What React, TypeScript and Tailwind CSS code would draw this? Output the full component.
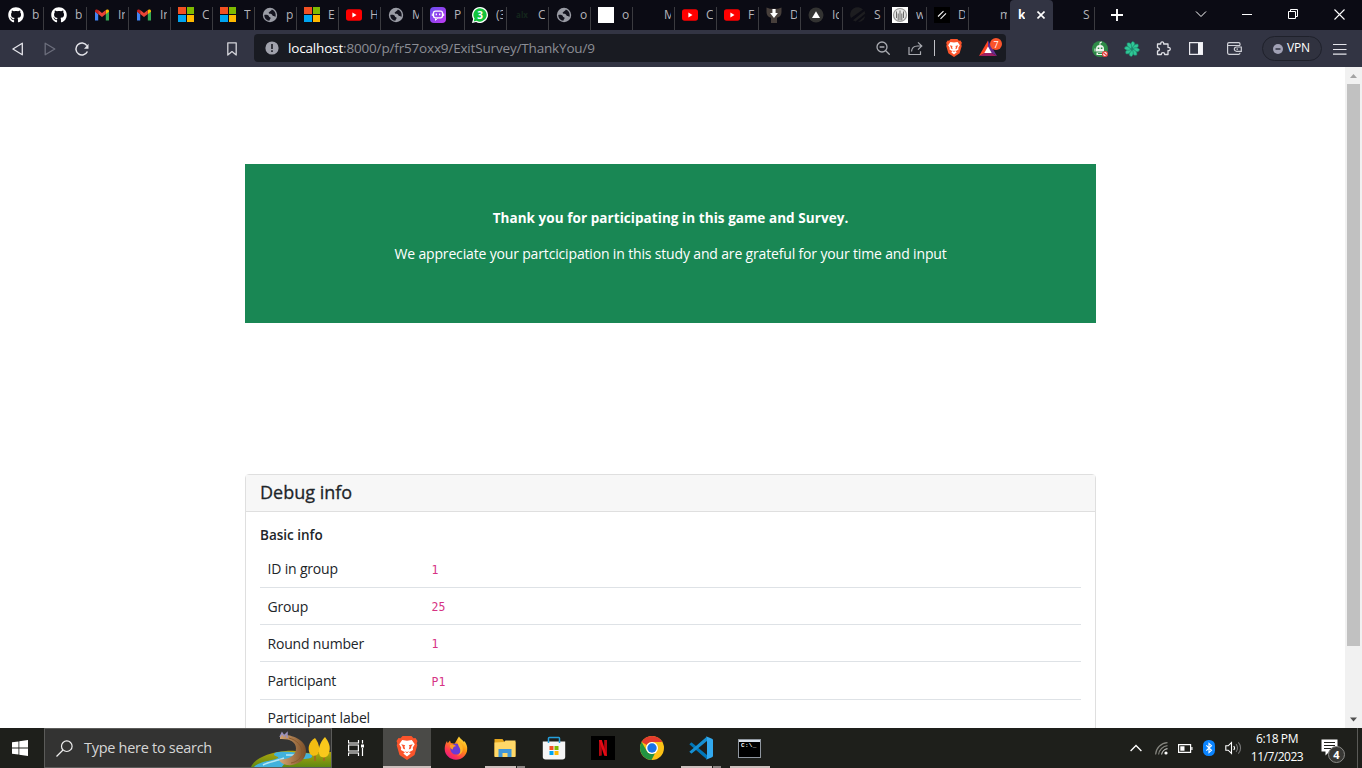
import React from "react";
import { FaGithub } from "react-icons/fa";

type P = { className?: string };

const Gmail = () => (
  <svg viewBox="0 0 16 16" className="size-4">
    <path d="M1 4.200V13.500h3.200V7L1 4.600z" fill="#4285f4" />
    <path d="M15 4.200V13.500h-3.200V7L15 4.600z" fill="#34a853" />
    <path d="M11.800 3.600V7.200L15 4.800V4c0-1.600-1.600-2-2.600-1.200z" fill="#fbbc04" />
    <path d="M4.200 3.600V7.200L1 4.800V4c0-1.600 1.600-2 2.600-1.200z" fill="#c5221f" />
    <path d="M4.200 3.100v4L8 10.100l3.800-3v-4L8 6.100z" fill="#ea4335" />
  </svg>
);

const Microsoft = () => (
  <svg viewBox="0 0 16 16" className="size-4" shapeRendering="crispEdges">
    <path d="M0 0h8v7H0z" fill="#f25022" />
    <path d="M9 0h7v7H9z" fill="#7fba00" />
    <path d="M0 8h8v7H0z" fill="#00a4ef" />
    <path d="M9 8h7v7H9z" fill="#ffb900" />
  </svg>
);

const Globe = () => (
  <svg viewBox="0 0 16 16" className="size-4">
    <circle cx="8" cy="8" r="7.200" fill="#9a9ca5" />
    <path d="M2.300 8C2.300 8 4.500 7.500 6 8.300c1.300.7.700 1.800 1.900 2 1 .3.800 1.500 0 2.200-.5.500-.3 1-.6 1.300C4.300 13.500 2.300 11 2.300 8z" fill="#14141f" />
    <path d="M9.800 2.600c2.200.8 3.900 2.900 3.900 5.400 0 .8-.2 1.500-.4 2-.6-.8-1.300-1-2-1-1 0-1-1.500-2-1.900-1.200-.3-2.300 0-2.600-1-.3-1 .8-1 1.300-1.600.5-.7 1.500-.5 1.800-1.900z" fill="#14141f" />
  </svg>
);

const YouTube = () => (
  <svg viewBox="0 0 16 16" className="size-4">
    <rect x="0" y="2.300" width="16" height="11.400" rx="2.600" fill="#f00" />
    <path d="M6.400 5.600v4.800L10.500 8z" fill="#fff" />
  </svg>
);

const Poe = () => (
  <svg viewBox="0 0 16 16" className="size-4">
    <defs>
      <linearGradient id="poe" x1="0" y1="0" x2="1" y2="1">
        <stop offset="0" stopColor="#6a4ff0" />
        <stop offset=".6" stopColor="#9b40ee" />
        <stop offset="1" stopColor="#c23cf5" />
      </linearGradient>
    </defs>
    <rect width="16" height="16" rx="4" fill="url(#poe)" />
    <rect x="3.500" y="4.200" width="9" height="6.600" rx="2" fill="none" stroke="#fff" strokeWidth="1.300" />
    <path d="M2.300 6.500v2.500M13.700 6.500v2.500M5.500 11.500v1.800l2-1.800" stroke="#fff" strokeWidth="1" fill="none" />
    <path d="M6.300 6.500v1.700M9.700 6.500v1.700" stroke="#fff" strokeWidth="1.300" />
  </svg>
);

const WhatsApp = () => (
  <span className="relative flex size-4 items-center justify-center">
    <svg viewBox="0 0 16 16" className="absolute inset-0 size-4">
      <path d="M8 0a8 8 0 1 1-3.900 15L0 16l1.100-4A8 8 0 0 1 8 0z" fill="#fff" />
      <path d="M8 1.200a6.700 6.700 0 1 1-3.400 12.500L1.700 14.400l.8-2.800A6.700 6.700 0 0 1 8 1.200z" fill="#12c33c" />
    </svg>
    <span className="relative text-[10px] leading-none font-bold text-white">3</span>
  </span>
);

const Alx = () => <span className="w-4 text-center text-[8px] leading-none font-bold text-[#14251c]">alx</span>;
const White = () => <span className="size-4 bg-white" />;
const Blank = () => <span className="size-4" />;

const DownCat = () => (
  <svg viewBox="0 0 16 16" className="size-4">
    <path d="M.5.500 4 1.800h8L15.500.500V5c0 3-1.500 5-4.500 5.800V16H5v-5.200C2 10 .5 8 .5 5z" fill="#473f3b" />
    <path d="M6.400 2h3.200v4h2.300L8 11 4.100 6h2.300z" fill="#fff" />
  </svg>
);
const TriangleDark = () => (
  <svg viewBox="0 0 16 16" className="size-4">
    <circle cx="8" cy="8" r="7.500" fill="#333332" />
    <path d="M8 4.200 12 11H4z" fill="#fff" />
  </svg>
);
const Sphere = () => (
  <svg viewBox="0 0 16 16" className="size-4">
    <path d="M1 11A7.400 7.400 0 0 1 13 2.600z" fill="#1d1d20" />
    <path d="m3 13.300 11.500-9.300.8 2.500L5.500 14.500zM8 15l7.300-6-1.500 3.500L11 14.600z" fill="#1d1d20" />
  </svg>
);
const Crest = () => (
  <svg viewBox="0 0 16 16" className="size-4">
    <path d="M0 0h16v16H0z" fill="#fff" />
    <circle cx="8" cy="8" r="6.500" fill="#e6e6e6" stroke="#999" strokeWidth="1.200" />
    <path d="M4.500 4.500v6.500M8 3.500v10M11.500 4.500v6.500M6.200 6.500v7M9.800 6.500v7" stroke="#6a6a6a" strokeWidth="1" />
  </svg>
);
const Slashes = () => (
  <svg viewBox="0 0 16 16" className="size-4">
    <path d="M0 0h16v16H0z" fill="#000" />
    <path d="m4 9.500 5.500-5.300M6.500 11.800 12 6.400" stroke="#f4f4f4" strokeWidth="1.100" />
  </svg>
);

const tabs: { icon: () => React.JSX.Element; label: string }[] = [
  { icon: () => <FaGithub className="size-4 text-white" />, label: "b" },
  { icon: () => <FaGithub className="size-4 text-white" />, label: "b" },
  { icon: Gmail, label: "Inb" },
  { icon: Gmail, label: "Inb" },
  { icon: Microsoft, label: "C" },
  { icon: Microsoft, label: "Ti" },
  { icon: Globe, label: "p" },
  { icon: Microsoft, label: "E" },
  { icon: YouTube, label: "H" },
  { icon: Globe, label: "M" },
  { icon: Poe, label: "P" },
  { icon: WhatsApp, label: "(3)" },
  { icon: Alx, label: "C" },
  { icon: Globe, label: "o" },
  { icon: White, label: "o" },
  { icon: Blank, label: "M" },
  { icon: YouTube, label: "C" },
  { icon: YouTube, label: "Fi" },
  { icon: DownCat, label: "D" },
  { icon: TriangleDark, label: "Ic" },
  { icon: Sphere, label: "S" },
  { icon: Crest, label: "w" },
  { icon: Slashes, label: "D" },
  { icon: Blank, label: "m" },
];

function TabStrip() {
  return (
    <div className="flex h-[30px] bg-[#0b0b14] text-[12px] text-[#b4b4ba]">
      {tabs.map(({ icon: Icon, label }, i) => (
        <div
          key={i}
          className={"flex h-[30px] shrink-0 items-center " + (i === 0 ? "w-11 pl-2" : i === 1 ? "w-[43px] pl-[7px]" : "w-[42px] pl-[7px]")}
        >
          <Icon />
          <span className="ml-2 w-[7px] shrink-0 overflow-hidden leading-4 whitespace-nowrap">{label}</span>
          <span className={"ml-auto mt-[7px] h-[23px] w-px self-start " + (i === 23 ? "" : "bg-[#3b3b40]")} />
        </div>
      ))}
      <div className="-ml-px flex h-[30px] w-[43px] shrink-0 items-center rounded-t-[4px] bg-[#323443] pl-2 text-white">
        <span className="w-[7px] overflow-hidden font-bold">k</span>
        <svg viewBox="0 0 8 8" className="ml-3 size-2">
          <path d="m.5.500 7 7m0-7-7 7" stroke="#fff" strokeWidth="1.600" />
        </svg>
      </div>
      <div className="flex h-[30px] w-[42px] items-center pl-[30px]">
        <span className="w-[7px]">S</span>
        <span className="ml-auto mt-[7px] h-[23px] w-px self-start bg-[#3b3b40]" />
      </div>
      <svg viewBox="0 0 12 12" className="mt-[9px] ml-4 size-3">
        <path d="M6 0v12M0 6h12" stroke="#fff" strokeWidth="1.900" />
      </svg>
      <svg viewBox="0 0 12 12" className="mt-2 ml-[72px] size-3" fill="none" stroke="#fff" strokeWidth="1">
        <path d="m1 3.500 5 5 5-5" />
      </svg>
      <svg viewBox="0 0 10 12" className="mt-2 ml-[35px] h-3 w-[10px]">
        <path d="M0 6.500h10" stroke="#fff" />
      </svg>
      <svg viewBox="0 0 11 11" className="mt-[9px] ml-[36px] size-[11px]" fill="none" stroke="#fff">
        <path d="M.5 2.500h7v7h-7zM2.500 2.500v-2h7v7h-2" />
      </svg>
      <svg viewBox="0 0 11 11" className="mt-[9px] ml-[35px] size-[11px]">
        <path d="m.5.500 10 10m0-10-10 10" stroke="#fff" strokeWidth="1.100" />
      </svg>
    </div>
  );
}

const BraveLion = ({ className }: P) => (
  <svg viewBox="0 0 24 24" className={className}>
    <path d="M7.500 0h9l2 2.300 2-.3 2 3-.8 2.300.6 2-2.800 9.700L12 24l-7.500-5L1.700 9.300l.6-2L1.500 5l2-3 2 .3z" fill="#fb542b" />
    <path d="M12 4.800 16.800 4l3 4.300-2 3.300.2 2.400-4 2.200 1.700 1.300L12 20.500l-3.700-3 1.700-1.300L6 14l.2-2.400-2-3.300 3-4.300z" fill="#fff" />
    <path d="m6.200 8.300 4 .9-.8 1.400.8 3L8 12.500l-.3-2zM17.800 8.300l-4 .9.800 1.400-.8 3 2.200-1.100.3-2zM9.700 15.300l2.300.8 2.300-.8-2.300 2z" fill="#fb542b" />
  </svg>
);

const Swirl = () => (
  <svg viewBox="0 0 16 16" className="ml-4 size-4 shrink-0">
    {[0, 45, 90, 135, 180, 225, 270, 315].map((a) => (
      <g key={a} transform={`rotate(${a} 8 8)`}>
        <path d="M8 8C6.500 5.500 6 2.500 8.500.4c2.300.4 3 2.600 1.700 4.600C9.300 6.200 8.200 6.800 8 8z" fill="#2fc796" stroke="#1d7f68" strokeWidth=".6" />
      </g>
    ))}
  </svg>
);

function Toolbar() {
  return (
    <div className="flex h-[37px] items-center bg-[#323443]">
      <svg viewBox="0 0 12 14" className="ml-3 h-[14px] w-3" fill="none" stroke="#e4e4ea" strokeWidth="1.300" strokeLinejoin="round">
        <path d="M10.300 1.200v11.600L.9 7z" />
      </svg>
      <svg viewBox="0 0 12 14" className="ml-5 h-[14px] w-3" fill="none" stroke="#6c6e7c" strokeWidth="1.300" strokeLinejoin="round">
        <path d="M1.200 1.200v11.600L10.800 7z" />
      </svg>
      <svg viewBox="0 0 15 14" className="ml-[19px] h-[14px] w-[15px]" fill="none">
        <path d="M11.900 3.600A6 6 0 1 0 12.400 9.500" stroke="#e4e4ea" strokeWidth="1.500" />
        <path d="M13.500 1.700v5H9z" fill="#e4e4ea" />
      </svg>
      <svg viewBox="0 0 12 14" className="ml-[136px] h-[14px] w-3" fill="none" stroke="#d4d4da" strokeWidth="1.300" strokeLinejoin="round">
        <path d="M1.800.8h8.400v12.200L6 9.600l-4.200 3.400z" />
      </svg>
      <div className="-mt-px ml-4 flex h-7 w-[752px] items-center rounded bg-[#191b22]">
        <svg viewBox="0 0 14 14" className="ml-[11px] size-[14px]">
          <circle cx="7" cy="7" r="6.600" fill="#a0a2ac" />
          <path d="M7 3v5M7 9.200v1.700" stroke="#191b22" strokeWidth="1.600" />
        </svg>
        <div className="ml-[9px] w-[588px] text-[13.500px] leading-5 tracking-[-0.170px] text-[#8c8e95]">
          <span className="text-white">localhost</span>:8000/p/fr57oxx9/ExitSurvey/ThankYou/9
        </div>
        <svg viewBox="0 0 14 14" className="size-[14px]" fill="none" stroke="#a9abb1" strokeWidth="1.300">
          <circle cx="6" cy="6" r="5" />
          <path d="m9.700 9.700 4 4M3.600 6h4.800" />
        </svg>
        <svg viewBox="0 0 15 15" className="ml-[18px] size-[15px]" fill="none" stroke="#a9abb1" strokeWidth="1.200">
          <path d="M1 6v7.500h11.500v-3.300M3.500 10.500c.3-3.500 2.500-5.500 6-5.500h4M10 1.400 13.800 5 10 8.600" />
        </svg>
        <span className="ml-[11px] h-4 w-px bg-[#c0c1c6]" />
        <BraveLion className="ml-[10px] size-[18px]" />
        <span className="relative ml-4 size-[18px]">
          <svg viewBox="0 0 18 18" className="size-[18px]">
            <path d="M9 1.500 0 17l9-4z" fill="#ff4724" />
            <path d="M9 1.500 18 17l-9-5z" fill="#662d91" />
            <path d="M0 17h18l-9-5z" fill="#9e1f63" />
            <path d="M9 7.500 12.700 14H5.300z" fill="#fff" />
          </svg>
          <span className="absolute top-[-1px] left-[11px] flex h-3 w-3 items-center justify-center rounded-full bg-[#fb542b] text-[9px] leading-none text-white">7</span>
        </span>
      </div>
      <svg viewBox="0 0 16 16" className="ml-[86px] size-4">
        <circle cx="8" cy="8" r="8" fill="#2e8b47" />
        <path d="M8 4V1.500L10 1" stroke="#fff" strokeWidth="1" fill="none" />
        <path d="M4 8a4 4 0 0 1 8 0v2.500H4zM4.500 11.500h7V14h-7zM2.500 7.500h1v3h-1z" fill="#f1f5f1" />
        <path d="M5.700 6.500h1.600v1.600H5.700zM8.800 6.500h1.600v1.600H8.800zM6 12h4v1H6z" fill="#2e8b47" />
        <circle cx="13" cy="13" r="2.500" fill="#fff" stroke="#e33b3b" strokeWidth="1.200" />
        <path d="m11.300 11.500 3.400 3" stroke="#e33b3b" strokeWidth="1.300" />
      </svg>
      <Swirl />
      <svg viewBox="0 0 15 15" className="ml-4 size-[15px]" fill="none" stroke="#dedfe5" strokeWidth="1.300" strokeLinejoin="round">
        <path d="M1.500 3h3.300c-.6-2.800 3.400-2.800 2.900 0H12v3.500c3-.6 3 3.500 0 3v4H8.700c0-2.400-3.400-2.400-3.400 0H1.500V10c2.600.2 2.600-3.500 0-3.300z" />
      </svg>
      <svg viewBox="0 0 14 13" className="ml-[18px] h-[13px] w-[14px]">
        <path d="M.6.600h12.800v11.800H.6z" fill="none" stroke="#e8e8ee" strokeWidth="1.200" />
        <path d="M9 1h4.500v11H9z" fill="#f4f4f8" />
      </svg>
      <svg viewBox="0 0 15 13" className="ml-6 h-[13px] w-[15px]" fill="none" stroke="#d0d1d8" strokeWidth="1.200">
        <path d="M13 3.500V2c0-.9-.5-1.400-1.300-1.400H2C1.100.6.600 1.100.6 2v8.800c0 .9.600 1.500 1.400 1.500h9.700c.8 0 1.300-.6 1.300-1.500M.6 3.500H13M14.300 5H9.500a2 2 0 0 0 0 4.300h4.800zM9.500 7.100h1.500" />
      </svg>
      <div className="ml-5 flex h-[25px] w-[60px] items-center rounded-full border border-[#1f212b] bg-[#30323f]">
        <svg viewBox="0 0 10 10" className="ml-[10px] size-[10px]">
          <circle cx="5" cy="5" r="5" fill="#a1a1b5" />
          <path d="M2.500 5h5" stroke="#323443" strokeWidth="1.500" />
        </svg>
        <span className="mb-px ml-[4px] text-[12px] leading-none tracking-[-0.2px] text-white">VPN</span>
      </div>
      <svg viewBox="0 0 14 12" className="ml-[11px] h-3 w-[14px]" stroke="#e4e4ea" strokeWidth="1.200">
        <path d="M0 1.500h13.500M0 6.500h13.500M0 11.200h13.500" />
      </svg>
    </div>
  );
}

const rows = [
  ["ID in group", "1"],
  ["Group", "25"],
  ["Round number", "1"],
  ["Participant", "P1"],
  ["Participant label", ""],
];

function Page() {
  return (
    <div className="flex h-[661px] overflow-hidden bg-white text-[14.4px] text-[#212529]">
      <main className="ml-[245px] w-[851px]">
        <section className="mt-[97px] flex h-[159px] flex-col items-center bg-[#198754] pt-[43px] leading-[22px] text-white">
          <p className="text-[13.5px] font-bold tracking-[0.060px] whitespace-nowrap">Thank you for participating in this game and Survey.</p>
          <p className="mt-[14px] text-[14px] tracking-[-0.160px] whitespace-nowrap">
            We appreciate your partcicipation in this study and are grateful for your time and input
          </p>
        </section>
        <section className="mt-[151px] h-[400px] rounded border border-[#dfdfdf]">
          <h2 className="flex h-[37px] items-center border-b border-[#dfdfdf] bg-[#f7f7f7] pb-px pl-[14px] text-[18px] font-medium [-webkit-text-stroke:0.3px]">
            Debug info
          </h2>
          <div className="px-[14px] pt-[13px]">
            <h3 className="text-[13.5px] leading-[21px] font-semibold">Basic info</h3>
            <div className="mt-[4.600px]">
              {rows.map(([k, v]) => (
                <div key={k} className="flex h-[37.300px] items-center border-b border-[#dee2e6] pl-[7.500px]">
                  <span className="w-[164px] text-[14px] tracking-[-0.180px]">{k}</span>
                  <code className="mt-[3px] font-['DejaVu_Sans_Mono',monospace] text-[11.500px] text-[#d63384]">{v}</code>
                </div>
              ))}
            </div>
          </div>
        </section>
      </main>
      <div className="ml-auto flex w-[17px] flex-col items-center bg-[#f1f1f1]">
        <svg viewBox="0 0 17 17" className="size-[17px] shrink-0">
          <path d="m5 11 3.500-4 3.500 4z" fill="#a3a3a3" />
        </svg>
        <span className="h-[562px] w-[13px] bg-[#c1c1c1]" />
        <svg viewBox="0 0 17 17" className="mt-auto size-[17px] shrink-0">
          <path d="m5 6.500 3.500 4 3.500-4z" fill="#505050" />
        </svg>
      </div>
    </div>
  );
}

const SearchArt = () => (
  <svg viewBox="0 0 80 38" className="ml-auto h-[38px] w-20">
    <defs>
      <linearGradient id="hill" x1="0" y1="0" x2="0" y2="1">
        <stop offset="0" stopColor="#b5a60b" />
        <stop offset="1" stopColor="#5e8a12" />
      </linearGradient>
      <linearGradient id="wood" x1="0" y1="0" x2="1" y2="0">
        <stop offset="0" stopColor="#d7a773" />
        <stop offset="1" stopColor="#7d4f28" />
      </linearGradient>
    </defs>
    <path d="M0 38C3 30 18 23 35 22c12-1 18 3 28 2l17-1v15z" fill="url(#hill)" />
    <path d="M3 38c5-6 19-6 24-9 2-2-7-2-3-5 6-2 15-1 24 0 8 0 14 0 13 4-3 3-13 1-18 3-5 1-9 2-12 7z" fill="#42b2dc" />
    <path d="M12 36c5-3 14-4 21-7M35 26h18" stroke="#b6e6f3" strokeWidth="1.500" fill="none" />
    <path d="M29 6c8-1 26 3 26 16 0 10-10 15-19 14-4-.5-7-3-8-5.500 8 .5 17-3 17-11 0-7-7-10-16-9.500z" fill="url(#wood)" />
    <path d="M38 9c8 2 13 8 13 14 0 6-5 10-11 11" stroke="#8a5a2c" fill="none" />
    <path d="m29 8 2-4 2 3 3-3v5" stroke="#9b91bb" strokeWidth="1.500" fill="none" />
    <path d="M64 24v8M73 22v10" stroke="#a0701c" strokeWidth="2" />
    <path d="M64 9c-6 4-8 10-5 16 3 3 8 2 9-2 1-5-1-10-4-14z" fill="#f3bd12" />
    <path d="M74 8c-5 5-8 13-5 19 4 3 8 1 9-3 2-6 0-11-4-16z" fill="#f9c81c" />
  </svg>
);

const Firefox = () => (
  <svg viewBox="0 0 24 24" className="size-6">
    <defs>
      <linearGradient id="ff" x1=".9" y1="0" x2=".2" y2="1">
        <stop offset="0" stopColor="#fff44f" />
        <stop offset=".4" stopColor="#ff980e" />
        <stop offset=".75" stopColor="#ff3750" />
        <stop offset="1" stopColor="#e5148c" />
      </linearGradient>
    </defs>
    <path d="M15 .5c1 2 3.500 3.500 5 5.500l.5-1c2 3 3 5.500 2.700 8.500C22.800 19.500 18 23.700 12 23.700S.7 19 .7 13c0-3 .8-5.800 2.300-8l.7 2.200L6 4.500l.8 2.600 3.700.6C12 6 13 3 15 .5z" fill="url(#ff)" />
    <circle cx="12" cy="13" r="5.600" fill="#6b3ad6" />
    <path d="M6 9c3-1 5 0 6 1.300-2.500-.1-3 1.500-3.200 3.200C7 13 5.500 11.500 6 9z" fill="#ff9a24" />
    <path d="M14 5c4 2 5.500 6 4.500 10-1 3-4 5-7 4.800 4 .5 5.500-4 4.500-7-.5-2-3-4-2-7.800z" fill="#ffb829" />
  </svg>
);
const Explorer = () => (
  <svg viewBox="0 0 24 24" className="size-6">
    <path d="M1.500 3h8l2 3h11v14h-21z" fill="#e5a61d" />
    <path d="M1.500 6.500 11 6l1.500-1.500h10V21h-21z" fill="#ffd868" />
    <path d="M5.500 21v-8h13v8h-4v-4h-5v4z" fill="#3f97da" />
  </svg>
);
const Store = () => (
  <svg viewBox="0 0 24 24" className="size-6">
    <path d="M.8 5.500h22.400v15.300c0 1.700-1 2.700-2.700 2.700h-17c-1.700 0-2.700-1-2.700-2.700z" fill="#f5f5f5" />
    <path d="M6.500 7V2.200c0-.5.400-.8.800-.8h9.400c.4 0 .8.300.8.800V7" stroke="#25a0dd" strokeWidth="1.500" fill="none" />
    <path d="M7.500 10h4v4h-4z" fill="#f25022" />
    <path d="M12.500 10h4v4h-4z" fill="#7fba00" />
    <path d="M7.500 15h4v4h-4z" fill="#00a4ef" />
    <path d="M12.500 15h4v4h-4z" fill="#ffb900" />
  </svg>
);
const Netflix = () => (
  <svg viewBox="0 0 24 24" className="size-6">
    <path d="M0 0h24v24H0z" fill="#000" />
    <path d="M8 4h2.800v15.500L8 20zM13.200 4H16v16l-2.800-.4z" fill="#b20710" />
    <path d="M8 4h2.800L16 20l-2.800-.4z" fill="#e50914" />
  </svg>
);
const Chrome = () => (
  <svg viewBox="0 0 24 24" className="size-6">
    <circle cx="12" cy="12" r="12" fill="#fbc116" />
    <path d="M12 0a12 12 0 0 1 10.400 6H12a6 6 0 0 0-5.200 3L1.600 6A12 12 0 0 1 12 0z" fill="#e33b2e" />
    <path d="M1.600 6 6.800 15A6 6 0 0 0 12 18l3 -.8L11.500 24A12 12 0 0 1 1.600 6z" fill="#229342" />
    <circle cx="12" cy="12" r="6" fill="#fff" />
    <circle cx="12" cy="12" r="4.700" fill="#1a73e8" />
  </svg>
);
const VsCode = () => (
  <svg viewBox="0 0 24 24" className="size-6">
    <path d="M.3 8.200 2 6.700c.3-.3.700-.3 1 0L18 19v4.500z" fill="#0077b9" />
    <path d="M.3 15.800 2 17.300c.3.300.7.300 1 0L18 5V.5z" fill="#1690d3" />
    <path d="m17 .2 6 2.600c.6.300 1 .8 1 1.500v15.400c0 .7-.4 1.200-1 1.500l-6 2.600c.6-.4 1-1 1-1.700V1.900c0-.7-.4-1.300-1-1.700z" fill="#32a9ef" />
  </svg>
);
const Terminal = () => (
  <span className="flex h-[19px] w-[23px] flex-col border border-[#8f969f] bg-black">
    <span className="h-[2px] bg-[#dce3ec]" />
    <span className="mt-px ml-[2px] font-['Liberation_Mono',monospace] text-[6px] leading-[6px] font-bold tracking-[0.3px] text-white">C:\_</span>
  </span>
);

function TaskItem({ children, active, line }: { children: React.ReactNode; active?: boolean; line?: "full" | "single" | "stack" }) {
  return (
    <div className={"flex h-10 flex-col items-center " + (active ? "w-12 bg-[#4a4a47]" : "w-[49px]")}>
      <div className="flex h-[38px] items-center pt-[2px]">{children}</div>
      {line === "full" && <span className="h-[2px] w-full bg-[#cbbfbc]" />}
      {line === "single" && <span className="h-[2px] w-10 bg-[#cbbfbc]" />}
      {line === "stack" && (
        <span className="flex h-[2px] w-10">
          <span className="w-[31px] bg-[#cbbfbc]" />
          <span className="ml-px w-2 bg-[#8b8583]" />
        </span>
      )}
    </div>
  );
}

function Taskbar() {
  return (
    <div className="flex h-10 items-center bg-[#1e1f1b] text-white">
      <svg viewBox="0 0 16 16" className="ml-3 size-4" fill="#fff">
        <path d="M0 2.300 6.500 1.400v6.200H0zM7.300 1.300 16 0v7.600H7.300zM0 8.400h6.500v6.200L0 13.700zM7.300 8.400H16V16l-8.700-1.300z" />
      </svg>
      <div className="ml-4 flex h-10 w-[288px] items-center border border-[#5b5b59] bg-[#333332]">
        <svg viewBox="0 0 17 17" className="ml-[11px] size-[17px]" fill="none" stroke="#eee" strokeWidth="1.200">
          <circle cx="10.800" cy="6.200" r="5.300" />
          <path d="M7 10 .5 16.500" />
        </svg>
        <span className="ml-[11px] text-[14.500px] tracking-[-0.290px] whitespace-nowrap text-[#d6d6d6]">Type here to search</span>
        <SearchArt />
      </div>
      <svg viewBox="0 0 17 16" className="ml-4 h-4 w-[17px]" fill="none" stroke="#fff" strokeWidth="1.200">
        <path d="M.5 0v3h10V0M.5 16v-3h10v3M.6 5h9.800v6H.6zM14.500 0v3.500M14.500 8v8" />
        <path d="M13 4.500h3v3h-3z" fill="#fff" stroke="none" />
      </svg>
      <div className="ml-[18px] flex">
        <TaskItem active line="full"><BraveLion className="size-6" /></TaskItem>
        <TaskItem><Firefox /></TaskItem>
        <TaskItem line="stack"><Explorer /></TaskItem>
        <TaskItem><Store /></TaskItem>
        <TaskItem><Netflix /></TaskItem>
        <TaskItem><Chrome /></TaskItem>
        <TaskItem line="stack"><VsCode /></TaskItem>
        <TaskItem line="single"><Terminal /></TaskItem>
      </div>
      <div className="ml-auto flex items-center">
        <svg viewBox="0 0 12 8" className="h-2 w-3" fill="none" stroke="#fff" strokeWidth="1.300">
          <path d="m.6 7 5.400-5.500L11.400 7" />
        </svg>
        <svg viewBox="0 0 13 13" className="mt-px ml-[13px] size-[13px]" fill="none" stroke="#85857f" strokeWidth="1.100">
          <path d="M.6 12.500C1 6 6 1 12.500.6M3.600 12.500C4 8 8 4 12.500 3.600" />
          <path d="M6.600 12.500c.4-3 3-5.500 5.900-5.900" stroke="#c9c9c5" />
          <circle cx="11" cy="11" r="1.600" fill="#fff" stroke="none" />
        </svg>
        <svg viewBox="0 0 15 9" className="ml-[10px] h-[9px] w-[15px]">
          <path d="M.6.600h12v7.800H.6z" fill="none" stroke="#fff" strokeWidth="1.200" />
          <path d="M2.300 2.300h4.200v4.400H2.300zM13.300 3h1.200v3h-1.200z" fill="#fff" />
        </svg>
        <svg viewBox="0 0 12 16" className="ml-[10px] h-4 w-3">
          <rect width="12" height="16" rx="5.500" fill="#0a84ff" />
          <path d="m3.300 5.300 5.200 5L6 12.600V3.400l2.500 2.300-5.200 5" fill="none" stroke="#fff" strokeWidth="1.100" />
        </svg>
        <svg viewBox="0 0 17 14" className="ml-[10px] h-[14px] w-[17px]" fill="none" strokeWidth="1.100">
          <path d="M.8 4.800h2.400L6.500 1.500v11L3.200 9.200H.8z" stroke="#fff" />
          <path d="M8.700 5c.9 1 .9 3 0 4" stroke="#fff" />
          <path d="M11 3.200c2 2 2 5.600 0 7.600M13.300 1.300c3 3 3 8.400 0 11.400" stroke="#777" />
        </svg>
        <div className="ml-[3px] flex w-16 flex-col items-center text-[12px] leading-[18px] whitespace-nowrap">
          <span className="tracking-[-0.4px]">6:18 PM</span>
          <span className="tracking-[-0.5px]">11/7/2023</span>
        </div>
        <div className="relative ml-3 h-[18px] w-[26px]">
          <svg viewBox="0 0 17 17" className="size-[17px]">
            <path d="M.5.500h16v12h-8L4.500 16.500v-4h-4z" fill="#fff" />
            <path d="M3 3.500h11M3 6.500h11M3 9.500h7" stroke="#1e1f1b" />
          </svg>
          <span className="absolute top-[7px] left-[7px] flex size-[17px] items-center justify-center rounded-full border border-[#8b8b88] bg-[#383835] text-[11px] leading-none font-bold">4</span>
        </div>
        <span className="ml-[10px] h-10 w-px bg-[#5a5a57]" />
        <span className="w-[4px]" />
      </div>
    </div>
  );
}

export default function App() {
  return (
    <div className="h-[768px] w-[1362px] overflow-hidden font-['Open_Sans','Noto_Sans',sans-serif]">
      <TabStrip />
      <Toolbar />
      <Page />
      <Taskbar />
    </div>
  );
}
